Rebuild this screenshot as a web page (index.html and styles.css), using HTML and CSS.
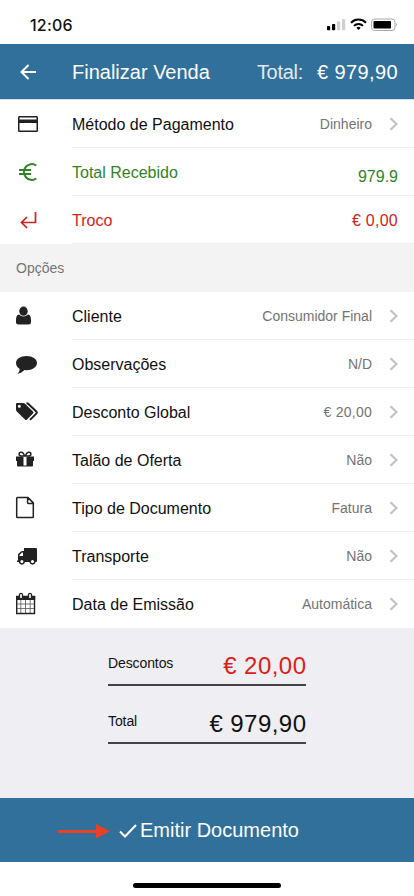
FILE: index.html
```html
<!DOCTYPE html>
<html lang="pt">
<head>
<meta charset="utf-8">
<meta name="viewport" content="width=device-width, initial-scale=1">
<title>Finalizar Venda</title>
<link rel="stylesheet" href="styles.css">
</head>
<body>
<svg class="defs" width="0" height="0"><symbol id="chev" viewBox="0 0 10 14"><path d="M1.500 1.200 7.500 7l-6 5.800" fill="none" stroke="#c3c3c7" stroke-width="2.200"/></symbol></svg>
<div class="screen">
  <div class="status">
    <span class="time">12:06</span>
    <svg width="72" height="14" viewBox="0 0 72 14">
      <rect x="0" y="8" width="3.200" height="4.200" rx=".7"/><rect x="5" y="6" width="3.200" height="6.200" rx=".7"/>
      <rect x="10" y="3.500" width="3.200" height="8.700" rx=".7" fill="#d0d0d0"/><rect x="15" y="1" width="3.200" height="11.200" rx=".7" fill="#d0d0d0"/>
      <g fill="none" stroke="#000" stroke-width="2"><path d="M24 4.700a10.500 10.500 0 0 1 15 0"/><path d="M27 7.900a6.300 6.300 0 0 1 9 0"/></g>
      <path d="m31.500 12-2.200-2.200a3.200 3.200 0 0 1 4.400 0z"/>
      <rect x="44.500" y="1" width="23.500" height="11.500" rx="3" fill="#fff" stroke="#aaa"/><rect x="46.500" y="3" width="17.500" height="7.500" rx=".8"/><path d="M69.200 5v3.500q1.500-1.700 0-3.500" fill="#999"/>
    </svg>
  </div>
  <header class="bar">
    <svg class="back" width="16" height="16" viewBox="0 0 16 16"><path d="M16 8H1.600M8.500 1 1.500 8l7 7" fill="none" stroke="#fff" stroke-width="2"/></svg>
    <h1>Finalizar Venda</h1>
    <span class="tl">Total:</span><span class="tv">€ 979,90</span>
  </header>
  <main>
    <div class="row"><span class="ico"><svg width="24" height="24" viewBox="0 0 24 24"><path fill="#222" d="M20.400 4H3.600c-1 0-1.600.700-1.600 1.600v12.800c0 .9.600 1.600 1.600 1.600h16.800c1 0 1.600-.7 1.600-1.600V5.600c0-.9-.6-1.600-1.600-1.600zm.1 14.500h-17V11h17v7.500zm0-11h-17v-2h17v2z"/></svg></span>
      <div class="body"><span class="lb">Método de Pagamento</span><span class="val">Dinheiro</span><svg class="ch"><use href="#chev"/></svg></div></div>
    <div class="row green"><span class="ico"><svg width="24" height="24" viewBox="0 0 24 24"><path fill="none" stroke="currentColor" stroke-width="2" d="M20.300 5.500A7.900 7.900 0 1 0 20.300 18.500M3 10h12M3 14h12"/></svg></span>
      <div class="body"><span class="lb">Total Recebido</span><span class="amt low">979.9</span></div></div>
    <div class="row red"><span class="ico"><svg width="24" height="24" viewBox="0 0 24 24"><path fill="none" stroke="currentColor" stroke-width="1.700" d="M19.500 4v10.500H6M11 9l-5.500 5.500L11 20"/></svg></span>
      <div class="body"><span class="lb">Troco</span><span class="amt euro">€ 0,00</span></div></div>
    <h2>Opções</h2>
    <div class="row"><span class="ico"><svg width="24" height="24" viewBox="0 0 24 24"><g fill="#222"><ellipse cx="11.500" cy="7.200" rx="4.200" ry="4.600"/><path d="M7 10.500c-2.200.400-3 2.400-3 5.500v2Q4 20.500 6.500 20.500h10q2.500 0 2.500-2.500v-2c0-3.100-.800-5.100-3-5.500q-4.500 4-9 0z"/></g></svg></span>
      <div class="body"><span class="lb">Cliente</span><span class="val">Consumidor Final</span><svg class="ch"><use href="#chev"/></svg></div></div>
    <div class="row"><span class="ico"><svg width="24" height="24" viewBox="0 0 24 24"><path fill="#222" d="M14.500 4C20.500 4 25 7 25 11s-4.500 7.200-10.500 7.200l-2-.1C10.500 20 8.500 21.500 5.500 22c1.400-1.500 2-3 2.200-5C5.500 15.700 4 13.500 4 11c0-4 4.500-7 10.500-7z"/></svg></span>
      <div class="body"><span class="lb">Observações</span><span class="val">N/D</span><svg class="ch"><use href="#chev"/></svg></div></div>
    <div class="row"><span class="ico"><svg width="24" height="24" viewBox="0 0 24 24"><path fill="#222" fill-rule="evenodd" d="M4 4.200q0-1.200 1.200-1.200H11q1.200 0 2 .800l8 7.800q1 1 0 2l-6 6q-1 1-2 0L4.800 11.500Q4 10.700 4 9.500zM7.300 4.800a1.500 1.500 0 1 0 0 3 1.500 1.500 0 0 0 0-3z"/><path d="M14.500 3.300c1 0 1.500.3 2.200 1l7.800 7.500q.8.800 0 1.600L18 19.900" fill="none" stroke="#222" stroke-width="2"/></svg></span>
      <div class="body"><span class="lb">Desconto Global</span><span class="val euro">€ 20,00</span><svg class="ch"><use href="#chev"/></svg></div></div>
    <div class="row"><span class="ico"><svg width="24" height="24" viewBox="0 0 24 24"><path fill="#222" d="M4 8.500h7V13H4zM15 8.500h7V13h-7zM5 13h6v5.500H6q-1 0-1-1zM15 13h6v4.500q0 1-1 1h-5z"/><path d="M11 9v9h4V9" fill="none" stroke="#222"/><path d="M12.500 8H9a1.900 1.900 0 0 1 0-3.800c2 0 3 1.800 3.500 3.800zm1 0H17a1.900 1.900 0 0 0 0-3.800c-2 0-3 1.800-3.500 3.800z" fill="none" stroke="#222" stroke-width="1.500"/></svg></span>
      <div class="body"><span class="lb">Talão de Oferta</span><span class="val">Não</span><svg class="ch"><use href="#chev"/></svg></div></div>
    <div class="row"><span class="ico"><svg width="24" height="24" viewBox="0 0 24 24"><path d="M5.500 1.600H16l5.300 5.300v14q0 .700-.700.700H5.500q-.800 0-.8-.700V2.300q0-.7.8-.7zM15.600 1.600v5.200q0 .700.700.700h5" fill="none" stroke="#222" stroke-width="1.500"/></svg></span>
      <div class="body"><span class="lb">Tipo de Documento</span><span class="val">Fatura</span><svg class="ch"><use href="#chev"/></svg></div></div>
    <div class="row"><span class="ico"><svg width="24" height="24" viewBox="0 0 24 24"><path fill="#222" fill-rule="evenodd" d="M12 4h12q1 0 1 1v12q0 1-1 1H5v-1.500h1V11q0-.800.600-1.400L9 7.500Q9.500 7 10.300 7H12zM7.500 12H11V8.500h-1L7.500 10.900z"/><g fill="#fff" stroke="#222" stroke-width="1.500"><circle cx="9.900" cy="17.600" r="2.300"/><circle cx="20.500" cy="17.600" r="2.300"/></g></svg></span>
      <div class="body"><span class="lb">Transporte</span><span class="val">Não</span><svg class="ch"><use href="#chev"/></svg></div></div>
    <div class="row last"><span class="ico"><svg width="24" height="24" viewBox="0 0 24 24"><path d="M4.700 4.500h17.800v17H4.700z" fill="#fff" stroke="#222" stroke-width="1.400"/><path fill="#222" d="M4 4h19.200v4H4z"/><path d="M8.800 8v13M13.500 8v13M18.200 8v13M5 12h17M5 16.500h17" stroke="#555" stroke-width=".8"/><g fill="#fff" stroke="#222" stroke-width="1.300"><rect x="7.500" y="1.300" width="3" height="5.500" rx="1.500"/><rect x="16.500" y="1.300" width="3" height="5.500" rx="1.500"/></g></svg></span>
      <div class="body"><span class="lb">Data de Emissão</span><span class="val">Automática</span><svg class="ch"><use href="#chev"/></svg></div></div>
  </main>
  <section class="sum">
    <div class="line"><span>Descontos</span><b class="neg">€ 20,00</b></div>
    <div class="line"><span>Total</span><b>€ 979,90</b></div>
  </section>
  <div class="cta">
    <svg class="arrow" width="52" height="16" viewBox="0 0 52 16"><path d="M0 9.400h40" stroke="#ea4025" stroke-width="3"/><path d="M38 2v14.500l14-7.200z" fill="#ea4025"/></svg>
    <svg class="check" width="18" height="14" viewBox="0 0 18 14"><path d="m1 7.500 5 5L17 1" fill="none" stroke="#fff" stroke-width="2"/></svg>
    <span>Emitir Documento</span>
  </div>
  <div class="home"><i></i></div>
</div>
</body>
</html>
```
FILE: styles.css
```css
* { box-sizing: border-box; }
body { margin: 0; background: #fff; color: #111; font-family: "Liberation Sans", Arial, sans-serif; }
svg { display: block; flex: none; }
.defs { position: absolute; }
.screen { width: 414px; height: 896px; display: flex; flex-direction: column; overflow: hidden; }
.status { height: 44px; flex: none; display: flex; justify-content: space-between; padding: 15px 15px 0 30px; }
.status svg { margin-top: 3px; }
.time { font: 500 16px/20px Inter, sans-serif; letter-spacing: 0.2px; }
.bar { height: 56px; flex: none; background: #31709a; color: #fff; display: flex; align-items: center; padding: 1px 16px 0 20px; border-bottom: 1px solid #d8e0e6; }
.back { margin-right: 36px; }
h1 { margin: 0; padding-top: 1px; font-size: 20px; font-weight: 400; flex: 1; white-space: nowrap; }
.tl { padding-top: 1px; font-size: 20px; letter-spacing: -0.3px; color: #e1eaf0; margin-right: 14px; }
.tv { padding-top: 1px; font-size: 20px; letter-spacing: 0.4px; white-space: nowrap; }
main { flex: none; }
.row { height: 48px; display: flex; padding-left: 16px; }
.ico { width: 56px; display: flex; align-items: center; }
.row .ico svg { overflow: visible; }
h2 ~ .row .ico svg { margin-left: -4px; }
.body { flex: 1; display: flex; align-items: center; border-bottom: 1px solid #ededed; padding: 2px 16px 0 0; }
.last .body { border-bottom-color: transparent; }
.lb { flex: 1; font-size: 16px; }
.val { font-size: 14px; color: #747474; margin-top: -2px; }
.ch { width: 10px; height: 14px; margin-left: 17px; margin-right: -1px; margin-top: -1px; }
.amt { font-size: 16px; }
.euro { letter-spacing: 0.25px; }
.low { padding-top: 8px; }
.green { color: #2f8427; }
.red { color: #cf2419; }
h2 { margin: 0; height: 48px; background: #f3f3f3; color: #747474; font-size: 14px; font-weight: 400; line-height: 48px; padding-left: 16px; }
.sum { flex: none; height: 170px; background: #efeef3; padding: 16px 108px 0; }
.line { height: 42px; margin-bottom: 16px; border-bottom: 2px solid #444; display: flex; align-items: center; justify-content: space-between; white-space: nowrap; }
.line span { font-size: 14px; letter-spacing: -0.1px; margin-top: -2px; }
.line b { font-size: 24px; letter-spacing: 0.45px; font-weight: 400; padding-top: 3px; margin-right: -0.45px; }
.line .neg { color: #de2018; }
.cta { flex: none; height: 64px; background: #31709a; color: #fff; display: flex; align-items: center; padding-left: 58px; font-size: 20px; white-space: nowrap; }
.check { margin: 1px 3px 0 9px; }
.home { flex: 1; display: flex; justify-content: center; padding-top: 21px; }
.home i { width: 148px; height: 5px; border-radius: 3px; background: #000; }
```
